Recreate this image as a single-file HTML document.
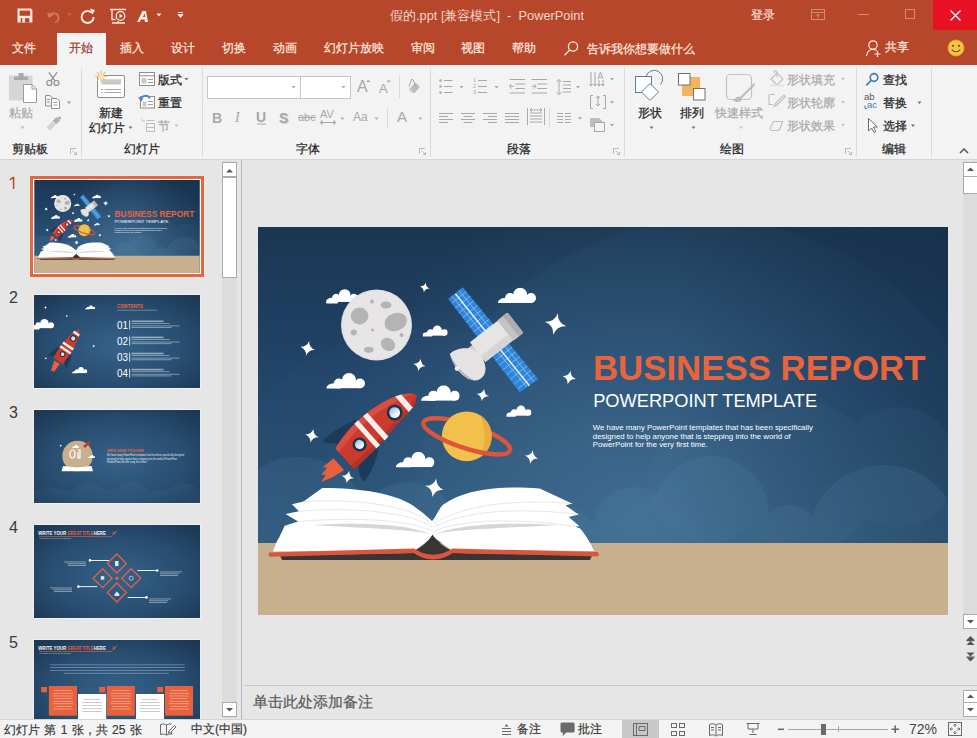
<!DOCTYPE html>
<html><head><meta charset="utf-8">
<style>
*{box-sizing:border-box}
html,body{margin:0;padding:0}
body{width:977px;height:738px;overflow:hidden;position:relative;background:#E6E6E6;font-family:"Liberation Sans",sans-serif;color:#444}
.a{position:absolute;white-space:nowrap}
.t12{font-size:12px;line-height:14px}
#title{left:0;top:0;width:977px;height:65px;background:#B7472A}
#ribbon{left:0;top:65px;width:977px;height:95px;background:#F3F3F3;border-bottom:1px solid #D5D5D5}
.tab{color:#FBE5DE;font-size:12px;line-height:14px;-webkit-text-stroke:0.25px currentColor}
.sep{position:absolute;width:1px;background:#DADADA}
.lbl{font-size:12px;line-height:14px;color:#262626;-webkit-text-stroke:0.25px currentColor}
.gray{color:#ABABAB}
#status{left:0;top:719px;width:977px;height:19px;background:#F3F3F3;border-top:1px solid #D4D4D4}
.st{font-size:12px;line-height:14px;color:#3A3A3A;-webkit-text-stroke:0.2px currentColor}
.num{font-size:16px;line-height:17px;color:#3A3A3A}
.thumb{position:absolute;left:33px;width:168px;height:95px;border:1px solid #F8F8F8;background:#24486A;overflow:hidden}
.sb{position:absolute;background:#fff;border:1px solid #ABABAB}
</style></head><body>

<svg width="0" height="0" style="position:absolute">
<defs>
 <linearGradient id="sky" x1="0" y1="0" x2="0" y2="1">
  <stop offset="0" stop-color="#1B3652"/>
  <stop offset="0.4" stop-color="#22456A"/>
  <stop offset="0.82" stop-color="#2B5477"/>
  <stop offset="1" stop-color="#2B5477"/>
 </linearGradient>
 <linearGradient id="rdark" x1="0" y1="0" x2="1" y2="0">
  <stop offset="0.6" stop-color="#13283F" stop-opacity="0"/>
  <stop offset="1" stop-color="#13283F" stop-opacity="0.38"/>
 </linearGradient>
 <radialGradient id="glow" gradientUnits="userSpaceOnUse" cx="380" cy="290" r="330">
  <stop offset="0" stop-color="#5B8DB3" stop-opacity="0.45"/>
  <stop offset="0.5" stop-color="#5B8DB3" stop-opacity="0.22"/>
  <stop offset="1" stop-color="#5B8DB3" stop-opacity="0"/>
 </radialGradient>
 <radialGradient id="sky2" cx="0.5" cy="0.55" r="0.7">
  <stop offset="0" stop-color="#35628A"/><stop offset="0.6" stop-color="#284D70"/><stop offset="1" stop-color="#1C3854"/>
 </radialGradient>
 <linearGradient id="win" x1="0" y1="0" x2="0" y2="1">
  <stop offset="0" stop-color="#9CC3DF"/><stop offset="0.55" stop-color="#D9EAF4"/><stop offset="1" stop-color="#FFFFFF"/>
 </linearGradient>
 <symbol id="cloud" viewBox="0 0 40 16">
  <g fill="#fff"><ellipse cx="7.5" cy="16" rx="7.5" ry="5.2"/><circle cx="12.8" cy="10.9" r="5.2"/><circle cx="23.4" cy="7.3" r="7.3"/><circle cx="34.8" cy="10.9" r="5.2"/><rect x="6" y="11" width="29" height="5"/></g>
 </symbol>
 <symbol id="star" viewBox="-1 -1 2 2">
  <circle r="0.35" fill="#fff" opacity="0.12"/><path d="M0-1Q.14-.14 1 0Q.14 .14 0 1Q-.14 .14-1 0Q-.14-.14 0-1Z" fill="#fff"/>
 </symbol>
 <symbol id="s1" viewBox="0 0 690 388">
  <rect width="690" height="388" fill="url(#sky)"/>
  <rect width="690" height="388" fill="url(#glow)"/>
  <circle cx="450" cy="287" r="294" fill="#4A7BA2" opacity="0.07"/>
  <circle cx="170" cy="330" r="230" fill="#4A7BA2" opacity="0.05"/>
  <rect width="690" height="388" fill="url(#rdark)"/>
  <g fill="#5A8AAE" opacity="0.07">
   <circle cx="545" cy="250" r="75"/>
   <circle cx="640" cy="240" r="60"/>
   <circle cx="450" cy="255" r="60"/>
  </g>
  <g fill="#5A8AAE" opacity="0.16">
   <circle cx="453" cy="287" r="58"/>
   <circle cx="376" cy="300" r="40"/>
   <circle cx="531" cy="308" r="30"/>
   <circle cx="626" cy="314" r="76"/>
   <circle cx="300" cy="318" r="40"/>
   <circle cx="40" cy="300" r="70"/>
   <circle cx="150" cy="305" r="50"/>
   <rect x="0" y="295" width="690" height="25"/>
  </g>
  <rect x="0" y="316" width="690" height="72" fill="#C8AF8E"/>
  <!-- clouds -->
  <use href="#cloud" x="68" y="60.6" width="32" height="15.9"/>
  <use href="#cloud" x="68" y="146" width="39.4" height="15.4"/>
  <use href="#cloud" x="164.5" y="97.6" width="25.2" height="12"/>
  <use href="#cloud" x="239.8" y="60.6" width="38.2" height="15.4"/>
  <use href="#cloud" x="163" y="158.3" width="38.7" height="15.5"/>
  <use href="#cloud" x="248.2" y="177.5" width="25.3" height="12.2"/>
  <use href="#cloud" x="137.8" y="224.8" width="38.6" height="15.5"/>
  <!-- stars -->
  <use href="#star" x="42.1" y="113.9" width="15" height="15" transform="rotate(12 49.6 121.4)"/>
  <use href="#star" x="161.8" y="55.5" width="10" height="10" transform="rotate(12 166.8 60.5)"/>
  <use href="#star" x="155.0" y="131.5" width="13" height="13" transform="rotate(12 161.5 138.0)"/>
  <use href="#star" x="286.6" y="86.0" width="22" height="22" transform="rotate(12 297.6 97.0)"/>
  <use href="#star" x="304.2" y="143.5" width="14" height="14" transform="rotate(12 311.2 150.5)"/>
  <use href="#star" x="218.4" y="161.5" width="13" height="13" transform="rotate(12 224.9 168.0)"/>
  <use href="#star" x="47.0" y="201.9" width="14" height="14" transform="rotate(12 54.0 208.9)"/>
  <use href="#star" x="83.4" y="243.5" width="13" height="13" transform="rotate(12 89.9 250.0)"/>
  <use href="#star" x="166.9" y="251.3" width="19" height="19" transform="rotate(12 176.4 260.8)"/>
  <use href="#star" x="266.5" y="223.0" width="14" height="14" transform="rotate(12 273.5 230.0)"/>
  <!-- moon -->
  <circle cx="118.5" cy="98" r="35.5" fill="#DDE2E8"/>
  <circle cx="118.5" cy="98" r="33.8" fill="#E7E5E5"/>
  <g fill="#B4B4B4">
   <ellipse cx="101.6" cy="89" rx="8.8" ry="8.4"/>
   <ellipse cx="137.7" cy="95" rx="11.5" ry="8.9" transform="rotate(-20 137.7 95)"/>
   <ellipse cx="128" cy="78" rx="5.5" ry="3.5"/>
   <ellipse cx="130" cy="117.4" rx="7.5" ry="6.3" transform="rotate(35 130 117.4)"/>
   <ellipse cx="110.8" cy="122.7" rx="4.8" ry="3"/>
   <circle cx="95.8" cy="105.6" r="3"/>
   <circle cx="114" cy="74.4" r="2"/>
   <circle cx="114.5" cy="103" r="1.5"/>
   <circle cx="143.5" cy="108" r="2"/>
  </g>
  <!-- satellite -->
  <clipPath id="panelclip"><path d="M190.1 71.7L204.8 60.3L280.3 152.2L261.6 165.2Z"/></clipPath>
  <path d="M190.1 71.7L204.8 60.3L280.3 152.2L261.6 165.2Z" fill="#2F85D9"/>
  <g clip-path="url(#panelclip)" stroke="#93C5F1" stroke-width="0.7" fill="none">
   <g transform="translate(235.2 112.2) rotate(50.6)">
    <path d="M-54 -12v24M-48 -12v24M-42 -12v24M-36 -12v24M-30 -12v24M-24 -12v24M-18 -12v24M-12 -12v24M-6 -12v24M6 -12v24M12 -12v24M18 -12v24M24 -12v24M30 -12v24M36 -12v24M42 -12v24M48 -12v24M54 -12v24"/>
    <path d="M-62 -4.5h124M-62 4.5h124"/>
   </g>
  </g>
  <path d="M197.4 66.8L271.4 158.7" stroke="#EAF3FC" stroke-width="1.4"/>
  <g transform="translate(237.8 111) rotate(-38)">
   <rect x="-30" y="-9" width="8" height="18" fill="#CFCDCD"/>
   <rect x="-23" y="-12.5" width="36" height="25" fill="#E6E4E4"/>
   <rect x="-23" y="5" width="36" height="7.5" fill="#D6D4D4"/>
   <rect x="12" y="-13" width="13" height="26" rx="1.5" fill="#C4C4C4"/>
   <rect x="19" y="-13" width="6" height="26" rx="1.5" fill="#ADADAD"/>
  </g>
  <path d="M191.75 127C196 122 205 120.5 212 121.5C221 123 227 133 227.5 141C228 148 223 154 216 153.5C208 150 196 139 191.75 127Z" fill="#E5E3E3"/>
  <path d="M191.75 127C196 139 206 149 216 153.5C208 153 196 143 191.75 127Z" fill="#C9C7C7"/>
  <circle cx="199" cy="141.6" r="2.3" fill="#F0F0F0"/>
  <!-- planet ring back -->
  <g transform="translate(208.7 209.3) rotate(18)">
   <path d="M-45.5 0A45.5 12 0 0 1 45.5 0" fill="none" stroke="#DD553A" stroke-width="4.5"/>
  </g>
  <circle cx="208.7" cy="209.3" r="24.9" fill="#F3C04B"/>
  <path d="M222 188A24.9 24.9 0 0 1 222 230.5Q231 209 222 188Z" fill="#E9A83F" opacity="0.8"/>
  <g transform="translate(208.7 209.3) rotate(18)">
   <path d="M-45.5 0A45.5 12 0 0 0 45.5 0" fill="none" stroke="#DD553A" stroke-width="4.5"/>
  </g>
  <!-- rocket -->
  <g transform="translate(86.8 231.9) rotate(-41.6)">
   <path d="M-8 -8L-8 8L-22 5.5L-33 1.5L-25 -0.5L-28 -4L-19 -5L-22 -8.5Z" fill="#E8613C"/>
   <path d="M6 -15C-1 -21 -4 -25 -4 -28.5C8 -29 26 -26 38 -20Z" fill="#1D3A58"/>
   <path d="M6 14C0 20 -1 26 -0.5 30C10 28 24 22 34 13Z" fill="#1D3A58"/>
   <path d="M0 -14C12 -18 28 -20 41 -19.8C56 -19.5 70 -17 82 -12C90 -8.5 95 -4 96 0C92 4 88 6.5 84.5 6.9C75 8 68 8.7 60 9.3L28 13.1L0 14Z" fill="#CB3A2D"/>
   <path d="M0 -14C12 -18 28 -20 41 -19.8C56 -19.5 70 -17 82 -12C88 -9 92 -6 94 -3C80 -9 60 -13 41 -13.5C28 -13.5 14 -12 0 -9Z" fill="#DD5446" opacity="0.8"/>
   <path d="M0 9L28 8.5L60 5.5C70 4.8 80 3.5 94 1.5C92 4 88 6.5 84.5 6.9C75 8 68 8.7 60 9.3L28 13.1L0 14Z" fill="#A92B22" opacity="0.6"/>
   <path d="M30.5 -20L35.5 -20L35.5 13L30.5 13.3Z" fill="#F3EFEC"/>
   <path d="M42 -19.8L47.5 -19.6L47.5 12.2L42 12.6Z" fill="#F3EFEC"/>
   <path d="M79 -13.2L85 -10.8L85 6.7L79 7.4Z" fill="#F3EFEC"/>
   <circle cx="20.6" cy="-1" r="7" fill="#1C3450"/>
   <circle cx="20.6" cy="-1" r="4.6" fill="url(#win)"/>
   <circle cx="68" cy="-1.5" r="8" fill="#1C3450"/>
   <circle cx="68" cy="-1.5" r="5.4" fill="url(#win)"/>
  </g>
  <!-- book -->
  <path d="M22 328.5L156 326Q175 338 194 326L334 328.5L332 333L24 333Z" fill="#3A3434"/>
  <path d="M15.1 324.6C17 318 19 314 21.3 310.3L26.7 298.7L40.1 294.6L27.6 287L41 284.3L33.9 277.2L45.5 274.5L64.3 261.1C100 261 140 266 159.2 281.7C168 288 172 292 175.4 295.1L175.4 310L157 323L15.1 324.6Z" fill="#FFFFFF"/>
  <path d="M335.5 323.9C333 318 331 314 331.2 315.3L321.5 301.4L317.2 299.4L321.5 299.2L310.7 290L320.4 287.4L307.5 278.4L314 276.6L281.7 261.6C235 258 205 264 185 277.8C180 283 178 290 174.2 293.8L175.4 310L193.5 323L335.5 323.9Z" fill="#FFFFFF"/>
  <path d="M331.2 315.3C328 310 325 305 321.5 301.4L335.5 323.9Z" fill="#fff" stroke="#fff" stroke-width="1"/>
  <g fill="none" stroke="#E4E4E4" stroke-width="0.9">
   <path d="M40.1 294.6C90 290 150 292 174 304"/>
   <path d="M41 284.3C90 280 150 284 174 300"/>
   <path d="M45.5 274.5C90 272 150 276 174 297"/>
   <path d="M317.2 299.4C260 291 205 292 176 304"/>
   <path d="M320.4 287.4C260 280 205 284 176 300"/>
   <path d="M314 276.6C260 272 205 277 176 297"/>
  </g>
  <path d="M55 298C100 295 150 297 172 307C150 302 100 301 55 298Z" fill="#CFCFCF" opacity="0.85"/>
  <path d="M300 298C250 295 200 297 178 307C200 302 250 301 300 298Z" fill="#CFCFCF" opacity="0.85"/>
  <path d="M156 324Q168 318 174.5 307.8Q181 318 194.5 324Q175 334 156 324Z" fill="#3A3434"/>
  <path d="M11.5 325.5L156 321.5Q175 334 194.5 321.5L339.5 325Q342 327 340 329.5L194.5 326Q175 339 156 326L11.5 329.8Q9.5 327.5 11.5 325.5Z" fill="#DA553B"/>
  <!-- text -->
  <text x="335" y="152.6" font-family="Liberation Sans" font-weight="bold" font-size="35" fill="#E8643C" textLength="332.5" lengthAdjust="spacingAndGlyphs">BUSINESS REPORT</text>
  <text x="335.2" y="179.7" font-family="Liberation Sans" font-size="17.5" fill="#FFFFFF" textLength="224" lengthAdjust="spacingAndGlyphs">POWERPOINT TEMPLATE</text>
  <g font-family="Liberation Sans" font-size="7.8" fill="#FFFFFF">
   <text x="334.8" y="202.6" textLength="220" lengthAdjust="spacingAndGlyphs">We have many PowerPoint templates that has been specifically</text>
   <text x="334.8" y="211.5" textLength="198" lengthAdjust="spacingAndGlyphs">designed to help anyone that is stepping into the world of</text>
   <text x="334.8" y="220.4" textLength="115" lengthAdjust="spacingAndGlyphs">PowerPoint for the very first time.</text>
  </g>
 </symbol>
</defs>
</svg>

<!-- title bar + tabs -->
<div id="title" class="a"></div>
<div class="a" style="left:933px;top:0;width:44px;height:30px;background:#E81123"></div>
<div class="a" style="left:57px;top:33px;width:49px;height:32px;background:#F3F3F3"></div>

<div class="a" style="left:390px;top:8px;font-size:12.8px;line-height:15px;color:#F4D6CD">假的.ppt [兼容模式] &nbsp;- &nbsp;PowerPoint</div>
<div class="a" style="left:751px;top:8px;font-size:12px;line-height:14px;color:#F4D6CD;-webkit-text-stroke:0.2px currentColor">登录</div>

<div class="a tab" style="left:12px;top:41px">文件</div>
<div class="a tab" style="left:69px;top:41px;color:#9C4130">开始</div>
<div class="a tab" style="left:120px;top:41px">插入</div>
<div class="a tab" style="left:171px;top:41px">设计</div>
<div class="a tab" style="left:222px;top:41px">切换</div>
<div class="a tab" style="left:273px;top:41px">动画</div>
<div class="a tab" style="left:324px;top:41px">幻灯片放映</div>
<div class="a tab" style="left:411px;top:41px">审阅</div>
<div class="a tab" style="left:461px;top:41px">视图</div>
<div class="a tab" style="left:512px;top:41px">帮助</div>
<div class="a tab" style="left:587px;top:42px">告诉我你想要做什么</div>
<div class="a tab" style="left:885px;top:40px">共享</div>

<!-- ribbon -->
<div id="ribbon" class="a"></div>

<!-- ribbon icons -->
<svg class="a" style="left:0;top:0" width="977" height="160" viewBox="0 0 977 160">
<!-- title bar icons -->
<path d="M17.5 8.6h13.5l1.4 1.4v12.5h-14.9z" fill="#FBE9E3"/>
<rect x="19.6" y="10.6" width="10.6" height="5.2" fill="#B7472A"/>
<rect x="20.6" y="18.2" width="8.8" height="4.3" fill="#B7472A"/>
<rect x="22.3" y="18.2" width="2.6" height="4.3" fill="#FBE9E3"/>
<path d="M49 15.5c3-3.5 9-3 9.5 2 .3 2.5-1.5 4.5-3.5 5" fill="none" stroke="#D07A62" stroke-width="1.8"/>
<path d="M47 12l1.5 6 5-2.5z" fill="#D07A62"/>
<path d="M67.5 13.5h4l-2 2.5z" fill="#C97056"/>
<path d="M92 13c-1-1.2-2.6-2-4.4-2a6 6 0 1 0 6 6" fill="none" stroke="#FBE9E3" stroke-width="1.9"/>
<path d="M90 8.5l5 1.5-2.5 4.5z" fill="#FBE9E3"/>
<g fill="none" stroke="#FBE9E3" stroke-width="1.3">
 <path d="M110 9.5h16M112 10v9.5h3.5"/>
 <circle cx="120.5" cy="16" r="4.3"/>
 <path d="M118 21v2M112 23h13"/>
</g>
<path d="M119.5 13.8v4.5l3.5-2.2z" fill="#FBE9E3"/>
<path d="M137 22l5.5-11h3.5l2 11h-3l-.4-2.5h-3.6l-1.3 2.5zm5.8-5h2.4l-.5-3.5z" fill="#FBE9E3"/>
<path d="M156.5 13.5h5l-2.5 3z" fill="#FBE9E3"/>
<path d="M178 12.5h5M178 14.5h5l-2.5 3z" fill="#FBE9E3" stroke="#FBE9E3" stroke-width="0.9"/>
<!-- window controls -->
<g fill="none" stroke="#D58C76" stroke-width="1">
 <rect x="811.5" y="9.5" width="13" height="10"/>
 <path d="M811.5 12.5h13M818 14v4M816.5 15.5l1.5-1.5 1.5 1.5"/>
 <path d="M858 14.5h11"/>
 <rect x="905.5" y="9.5" width="9" height="9"/>
</g>
<path d="M950.5 10.5l10 10M960.5 10.5l-10 10" stroke="#fff" stroke-width="1.3"/>
<!-- search -->
<g fill="none" stroke="#FBE9E3" stroke-width="1.3">
 <circle cx="573" cy="46.5" r="4.6"/>
 <path d="M569.8 50l-5.3 5.3"/>
</g>
<!-- share person -->
<g fill="none" stroke="#FBE9E3" stroke-width="1.2">
 <circle cx="873" cy="45" r="4.2"/>
 <path d="M866.5 56c0.5-4 3-6.5 6.5-6.5 1.5 0 2.8.4 3.8 1.1"/>
 <path d="M877.5 51v6M874.5 54h6"/>
</g>
<!-- smiley -->
<circle cx="956" cy="48" r="8" fill="#F5C242" stroke="#E6A630" stroke-width="0.8"/>
<circle cx="953" cy="45.8" r="1.1" fill="#7A4B1A"/><circle cx="959" cy="45.8" r="1.1" fill="#7A4B1A"/>
<path d="M951.8 49.5c1.8 3 6.6 3 8.4 0" fill="none" stroke="#7A4B1A" stroke-width="1.1"/>

<!-- separators -->
<g fill="#DADADA">
 <rect x="81" y="68" width="1" height="89"/>
 <rect x="202" y="68" width="1" height="89"/>
 <rect x="430" y="68" width="1" height="89"/>
 <rect x="624" y="68" width="1" height="89"/>
 <rect x="856" y="68" width="1" height="89"/>
 <rect x="931" y="68" width="1" height="89"/>
 <rect x="399" y="76" width="1" height="22"/>
 <rect x="387" y="108" width="1" height="20"/>
 <rect x="549" y="108" width="1" height="20"/>
</g>
<!-- dialog launchers -->
<g fill="none" stroke="#B4B4B4" stroke-width="0.9">
 <path d="M70.5 154v-5.5h5.5M72.5 150.5l4 4M74 154.5h2.5v-2.5"/>
 <path d="M419.5 154v-5.5h5.5M421.5 150.5l4 4M423 154.5h2.5v-2.5"/>
 <path d="M613.5 154v-5.5h5.5M615.5 150.5l4 4M617 154.5h2.5v-2.5"/>
 <path d="M845.5 154v-5.5h5.5M847.5 150.5l4 4M849 154.5h2.5v-2.5"/>
</g>
<path d="M960 153l4-4 4 4" fill="none" stroke="#555" stroke-width="1.5"/>

<!-- clipboard group -->
<rect x="9" y="75.5" width="23.5" height="25" fill="#D6D6D6"/>
<path d="M14 76.5h14v3.5h-14zM18.5 73h5v3.5h-5z" fill="#A9A9A9"/>
<path d="M23.5 84.5h8.5l4.5 4.5v13.5h-13z" fill="#fff" stroke="#9C9C9C"/>
<path d="M32 84.5v4.5h4.5" fill="none" stroke="#9C9C9C"/>
<g fill="none" stroke="#8E8E8E" stroke-width="1.2">
 <circle cx="49.3" cy="83" r="2.5"/><circle cx="56.5" cy="83" r="2.5"/>
 <path d="M50.8 80.8L57 72.3M55 80.8L48.8 72.3"/>
</g>
<g fill="#F3F3F3" stroke="#8E8E8E" stroke-width="1">
 <path d="M45.5 95.5h4.5l2 2v8.5h-6.5z"/>
 <path d="M51.5 98.5h5.5l2.5 2.5v7.5h-8z" fill="#fff"/>
</g>
<path d="M47 99.5h3M47 102h3M53.5 102.5h4M53.5 105h4" stroke="#8E8E8E" stroke-width="0.9"/>
<path d="M67 101.5h4l-2 2.5z" fill="#9A9A9A"/>
<path d="M46.5 127l5.5-5.5 3.5 3.5-5.5 5.5z" fill="#D3D3D3"/>
<path d="M52.5 121l4-4 3.5 3.5-4 4z" fill="#B0B0B0"/>
<path d="M57.5 118l2-2 2 2-2 2z" fill="#B0B0B0"/>
<path d="M20.5 126.5h4l-2 2.5z" fill="#B5B5B5"/>

<!-- slides group -->
<rect x="97.5" y="75.5" width="27" height="22" rx="1.5" fill="#fff" stroke="#8E8E8E"/>
<rect x="101.5" y="79.3" width="19.5" height="5.2" fill="#C9C9C9"/>
<path d="M101 89.5h2M104.5 89.5h16.5M101 92.5h2M104.5 92.5h16.5" stroke="#A0A0A0" stroke-width="0.9"/>
<g stroke="#F4C47C" stroke-width="1.3">
 <path d="M101.2 70.5v12M95.2 76.4h12M97 72.2l8.4 8.4M105.4 72.2l-8.4 8.4"/>
</g>
<circle cx="101.2" cy="76.4" r="2.6" fill="#FBE3B8"/>
<path d="M128.5 126.5h4l-2 2.5z" fill="#707070"/>
<rect x="139.5" y="72.5" width="15" height="13" fill="#fff" stroke="#8E8E8E"/>
<path d="M139.5 75.8h15" stroke="#8E8E8E"/>
<rect x="141.5" y="78" width="5" height="5.5" fill="#C9C9C9"/>
<path d="M148 79.5h5M148 82.5h5" stroke="#8E8E8E" stroke-width="0.9"/>
<path d="M184.5 78h4l-2 2.5z" fill="#707070"/>
<rect x="140.5" y="96.5" width="14" height="11.5" fill="#fff" stroke="#8E8E8E"/>
<rect x="142.5" y="101.5" width="4" height="5" fill="#C9C9C9"/>
<path d="M148 101.5h5M148 104.5h5" stroke="#8E8E8E" stroke-width="0.9"/>
<path d="M140.5 99.5c1-4 7-5.5 9.5-1" fill="none" stroke="#4C8DC4" stroke-width="1.8"/>
<path d="M138 97l3 5 2.5-4z" fill="#4C8DC4"/>
<g fill="none" stroke="#BDBDBD" stroke-width="1">
 <path d="M146.5 120.5h8M146.5 123.5h8v8h-8zM146.5 127.5h8"/>
</g>
<path d="M141 118.5l1 2.5 2.5-1-1 2" stroke="#D0D0D0" stroke-width="1" fill="none"/>
<path d="M174.5 124.5h4l-2 2.5z" fill="#C2C2C2"/>

<!-- font group -->
<rect x="207.5" y="76.5" width="93" height="22" fill="#fff" stroke="#C6C6C6"/>
<rect x="300.5" y="76.5" width="50" height="22" fill="#fff" stroke="#C6C6C6"/>
<path d="M291.5 86h4l-2 2.5zM341.5 86h4l-2 2.5z" fill="#A8A8A8"/>
<path d="M366 82l2.2-2.2 2.2 2.2zM386.5 80.5h4.4l-2.2 2.2z" fill="#A8A8A8"/>
<path d="M374.5 117.5h4l-2 2.5zM340.5 117.5h4l-2 2.5zM418.5 117.5h4l-2 2.5z" fill="#B0B0B0"/>
<g fill="none" stroke="#A8A8A8" stroke-width="1.1">
 <path d="M320.5 122.5h15M322.5 120.5l-2 2 2 2M333.5 120.5l2 2-2 2"/>
</g>
<path d="M409.5 89l6-6.5 4.5 4.5-6 6.5z" fill="#BDBDBD"/>
<path d="M412 92.5l-2.5-3.5" stroke="#D2D2D2" stroke-width="2"/>
<path d="M409 86.5l2.5-7h1.5l2.5 7" fill="none" stroke="#A8A8A8" stroke-width="1"/>
<rect x="257" y="123.5" width="9" height="1" fill="#A8A8A8"/>

<!-- paragraph group -->
<g fill="#A8A8A8">
 <circle cx="440.5" cy="80.5" r="1.3"/><circle cx="440.5" cy="86.5" r="1.3"/><circle cx="440.5" cy="92.5" r="1.3"/>
 <path d="M459.5 86h4l-2 2.5zM494.5 86h4l-2 2.5zM576 86h4l-2 2.5zM610 78h4l-2 2.5zM610 101h4l-2 2.5zM610 124h4l-2 2.5zM578 117h4l-2 2.5z"/>
</g>
<g fill="none" stroke="#A8A8A8" stroke-width="1">
 <path d="M444 80.5h8.5M444 86.5h8.5M444 92.5h8.5"/>
 <path d="M478 80.5h9M478 86.5h9M478 92.5h9"/>
 <path d="M509.5 79.5h15.5M515.5 84h9.5M515.5 88.5h9.5M509.5 93h15.5M514 86.3h-4.5M511.5 84l-2 2.3 2 2.3"/>
 <path d="M531.5 79.5h15.5M537.5 84h9.5M537.5 88.5h9.5M531.5 93h15.5M531.5 86.3h4.5M534 84l2 2.3-2 2.3"/>
 <path d="M559 79.5v15M556.5 82l2.5-2.5 2.5 2.5M556.5 92l2.5 2.5 2.5-2.5M563 81.5h8M563 85h8M563 88.5h8M563 92h8"/>
 <path d="M439 113.5h14M439 116.5h9M439 119.5h14M439 122.5h9"/>
 <path d="M461 113.5h14M463.5 116.5h9M461 119.5h14M463.5 122.5h9"/>
 <path d="M483 113.5h14M488 116.5h9M483 119.5h14M488 122.5h9"/>
 <path d="M505 113.5h14M505 116.5h14M505 119.5h14M505 122.5h14"/>
 <path d="M527.5 108v17M544.5 108v17M530 113h12M530 116h12M530 119h12M530 122h12M530 110h12M532 108l-2 2 2 2M540 108l2 2-2 2"/>
 <path d="M557 113.5h6M557 116.5h6M557 119.5h6M557 122.5h6M565 113.5h6M565 116.5h6M565 119.5h6M565 122.5h6"/>
 <path d="M591 72v14M595 72v14M599 80v6M603 80v6M589.5 84l1.5 2 1.5-2M593.5 84l1.5 2 1.5-2M597.5 84l1.5 2 1.5-2M601.5 84l1.5 2 1.5-2"/>
 <path d="M598 79l2.5-7 2.5 7M599 77h3"/>
 <path d="M593 95.5h-2.5v13h2.5M603 95.5h2.5v13H603M598 96v10M596 98l2-2 2 2M596 104l2 2 2-2"/>
 <rect x="594.5" y="122.5" width="10" height="9"/>
</g>
<path d="M590 118h9l4 4h-9v5h-4z" fill="#BDBDBD"/>

<!-- drawing group -->
<g fill="none" stroke="#5B7F9B" stroke-width="1">
 <path d="M646 76.5a8.5 8.5 0 1 1 14.5 8"/>
 <rect x="635.5" y="76.5" width="16" height="16" fill="#fff"/>
 <path d="M650 83.5l8.5 8.5-8.5 8.5-8.5-8.5z" fill="#fff"/>
</g>
<rect x="682" y="77" width="18" height="19" fill="#F2B45E"/>
<rect x="678.5" y="73.5" width="11.5" height="11.5" fill="#fff" stroke="#707070"/>
<rect x="693.5" y="88.5" width="11.5" height="11.5" fill="#fff" stroke="#707070"/>
<rect x="726.5" y="74.5" width="25" height="25" rx="4" fill="none" stroke="#C2C2C2" stroke-width="1.2"/>
<path d="M733 101c2-4 5-5 7-4l14-14 1.5 1.5-14 14c1 2-1 5-8.5 2.5z" fill="#BDBDBD"/>
<path d="M649.5 126.5h4l-2 2.5zM691.5 126.5h4l-2 2.5z" fill="#707070"/>
<path d="M739 126.5h4l-2 2.5z" fill="#C2C2C2"/>
<g fill="none" stroke="#BDBDBD" stroke-width="1.1">
 <path d="M771 79l6-6 6 6-6 6z"/>
 <path d="M774 73c0-3 3-3 3 0v4"/>
 <path d="M769.5 94.5h-.5v10h4M770 94.5h5"/>
 <path d="M775 104l9-9 1.5 1.5-9 9-2.5 1z"/>
 <path d="M770.5 127.5l3-6h9l-2 6c-.5 2-2 3-4 3h-4c-2 0-2.5-1-2-3z"/>
</g>
<path d="M770 85.5h14" stroke="#E2E2E2" stroke-width="2"/>
<path d="M841 78h4l-2 2.5zM841 101h4l-2 2.5zM841 124h4l-2 2.5z" fill="#C2C2C2"/>

<!-- editing group -->
<g fill="none" stroke="#3F7FB0" stroke-width="1.7">
 <circle cx="874" cy="77.5" r="3.8"/>
 <path d="M871.2 80.3l-5 5"/>
</g>
<path d="M917.5 101.5h4l-2 2.5zM911 124.5h4l-2 2.5z" fill="#707070"/>
<path d="M868.5 118.5v12.5l3-3 2.5 4.5 1.8-1-2.5-4.5h4z" fill="#fff" stroke="#6A6A6A" stroke-width="1"/>
<path d="M865 105.5v3h2" fill="none" stroke="#3F7FB0" stroke-width="1"/>
</svg>
<div class="a" style="left:864px;top:93px;font-size:9.5px;line-height:8px;color:#555">ab</div>
<div class="a" style="left:867px;top:100px;font-size:9.5px;line-height:9px;color:#3F7FB0">ac</div>
<div class="a" style="left:473px;top:77px;font-size:5.5px;line-height:6px;color:#A8A8A8;white-space:pre">1
2
3</div>
<div class="a" style="left:212px;top:110px;font-size:14px;line-height:16px;color:#A8A8A8;font-weight:bold">B</div>
<div class="a" style="left:235px;top:110px;font-size:14px;line-height:16px;color:#A8A8A8;font-style:italic;font-family:'Liberation Serif',serif">I</div>
<div class="a" style="left:256px;top:109px;font-size:14px;line-height:16px;color:#A8A8A8;font-weight:bold">U</div>
<div class="a" style="left:279px;top:110px;font-size:14px;line-height:16px;color:#A8A8A8;font-weight:bold;text-shadow:1px 1px 1px #ccc">S</div>
<div class="a" style="left:298px;top:110px;font-size:11px;line-height:14px;color:#A8A8A8;text-decoration:line-through">abc</div>
<div class="a" style="left:320px;top:108px;font-size:11px;line-height:12px;color:#A8A8A8">AV</div>
<div class="a" style="left:353px;top:110px;font-size:12px;line-height:14px;color:#A8A8A8">Aa</div>
<div class="a" style="left:397px;top:108px;font-size:15px;line-height:17px;color:#A8A8A8">A</div>
<div class="a" style="left:357px;top:78px;font-size:16px;line-height:18px;color:#A8A8A8">A</div>
<div class="a" style="left:379px;top:81px;font-size:13px;line-height:15px;color:#A8A8A8">A</div>

<!-- ribbon labels -->
<div class="a lbl gray" style="left:9px;top:106px">粘贴</div>
<div class="a lbl" style="left:12px;top:142px">剪贴板</div>
<div class="a lbl" style="left:99px;top:106px">新建</div>
<div class="a lbl" style="left:89px;top:121px">幻灯片</div>
<div class="a lbl" style="left:158px;top:73px">版式</div>
<div class="a lbl" style="left:158px;top:96px">重置</div>
<div class="a lbl gray" style="left:158px;top:119px">节</div>
<div class="a lbl" style="left:124px;top:142px">幻灯片</div>
<div class="a lbl" style="left:296px;top:142px">字体</div>
<div class="a lbl" style="left:507px;top:142px">段落</div>
<div class="a lbl" style="left:638px;top:106px">形状</div>
<div class="a lbl" style="left:680px;top:106px">排列</div>
<div class="a lbl gray" style="left:715px;top:106px">快速样式</div>
<div class="a lbl" style="left:720px;top:142px">绘图</div>
<div class="a lbl gray" style="left:787px;top:73px">形状填充</div>
<div class="a lbl gray" style="left:787px;top:96px">形状轮廓</div>
<div class="a lbl gray" style="left:787px;top:119px">形状效果</div>
<div class="a lbl" style="left:883px;top:73px">查找</div>
<div class="a lbl" style="left:883px;top:96px">替换</div>
<div class="a lbl" style="left:883px;top:119px">选择</div>
<div class="a lbl" style="left:882px;top:142px">编辑</div>


<!-- left pane -->
<div class="a" style="left:222px;top:161px;width:15px;height:557px;background:#DCDCDC"></div>
<div class="sb" style="left:222px;top:162px;width:15px;height:15px"></div>
<div class="sb" style="left:222px;top:177px;width:15px;height:101px"></div>
<div class="sb" style="left:222px;top:702px;width:15px;height:15px"></div>
<div class="a" style="left:241px;top:160px;width:1px;height:559px;background:#B8B8B8"></div>

<svg class="a" style="left:0;top:170px" width="25" height="25"><path d="M13.6 7v12M13.6 7.2L9.8 9.8" fill="none" stroke="#B7472A" stroke-width="1.5"/></svg>
<div class="a num" style="left:9px;top:289px">2</div>
<div class="a num" style="left:9px;top:404px">3</div>
<div class="a num" style="left:9px;top:519px">4</div>
<div class="a num" style="left:9px;top:634px">5</div>

<div class="a" style="left:30px;top:176px;width:174px;height:101px;border:3px solid #E3683F;background:#fff"></div>
<div class="a" style="left:33px;top:294px;width:168px;height:95px;background:#F2F2F2;border:1px solid #F0F0F0"></div>
<div class="a" style="left:33px;top:409px;width:168px;height:95px;background:#F2F2F2;border:1px solid #F0F0F0"></div>
<div class="a" style="left:33px;top:524px;width:168px;height:95px;background:#F2F2F2;border:1px solid #F0F0F0"></div>
<div class="a" style="left:33px;top:639px;width:168px;height:80px;background:#F2F2F2;border:1px solid #F0F0F0;border-bottom:none"></div>

<svg class="a" style="left:34px;top:180px" width="166" height="93"><use href="#s1" width="166" height="93"/></svg>
<svg class="a" style="left:34px;top:295px" width="166" height="93" viewBox="0 0 166 93">
 <rect width="166" height="93" fill="url(#sky2)"/>
 <use href="#cloud" x="-3" y="22.7" width="23" height="11.7"/>
 <use href="#cloud" x="50.7" y="10.2" width="10.7" height="4.1"/>
 <use href="#cloud" x="38" y="72" width="15.4" height="6.3"/>
 <use href="#star" x="10" y="11" width="3" height="3"/>
 <use href="#star" x="31.5" y="19.7" width="2.6" height="2.6"/>
 <use href="#star" x="58.2" y="49.5" width="3" height="3"/>
 <use href="#star" x="10.5" y="62" width="2.6" height="2.6"/>
 <g transform="translate(24 66) rotate(-56) scale(0.4)">
   <path d="M-4 -8L-32 -1L-26 3L-30 7L-4 8Z" fill="#E8623D"/>
   <path d="M5 -13L-3 -29L20 -24L40 -14Z" fill="#1E3B5A"/>
   <path d="M5 13L-4 28L20 24L40 14Z" fill="#1E3B5A"/>
   <path d="M0 -14L0 14L30 15.5C60 15 85 8 96 0C85 -8 60 -15 30 -15.5Z" fill="#CC3A2C"/>
   <rect x="30.5" y="-16" width="6" height="32" fill="#F4F1EE"/>
   <rect x="42" y="-15.5" width="6" height="31" fill="#F4F1EE"/>
   <path d="M79.5 -9.5L85.5 -8L85.5 8L79.5 9.5Z" fill="#F4F1EE"/>
   <circle cx="20.6" cy="0" r="7" fill="#1C3450"/><circle cx="20.6" cy="0" r="4.5" fill="#CFE3F0"/>
   <circle cx="68" cy="0" r="8" fill="#1C3450"/><circle cx="68" cy="0" r="5.3" fill="#CFE3F0"/>
 </g>
 <text x="83" y="13" font-family="Liberation Sans" font-weight="bold" font-size="5.8" fill="#E8643C" textLength="26" lengthAdjust="spacingAndGlyphs">CONTENTS</text>
 <rect x="83" y="14.8" width="40" height="0.7" fill="#9FB3C6" opacity="0.8"/>
 <g fill="#fff">
  <text x="83" y="33.5" font-family="Liberation Sans" font-size="10" textLength="11" lengthAdjust="spacingAndGlyphs">01</text>
  <text x="83" y="49.6" font-family="Liberation Sans" font-size="10" textLength="11" lengthAdjust="spacingAndGlyphs">02</text>
  <text x="83" y="65.7" font-family="Liberation Sans" font-size="10" textLength="11" lengthAdjust="spacingAndGlyphs">03</text>
  <text x="83" y="81.8" font-family="Liberation Sans" font-size="10" textLength="11" lengthAdjust="spacingAndGlyphs">04</text>
  <rect x="95.3" y="25.4" width="0.8" height="9"/><rect x="95.3" y="41.5" width="0.8" height="9"/>
  <rect x="95.3" y="57.6" width="0.8" height="9"/><rect x="95.3" y="73.7" width="0.8" height="9"/>
 </g>
 <g fill="#DCE5EE" opacity="0.6">
  <rect x="97.5" y="25.5" width="32" height="1.6"/><rect x="97.5" y="28" width="38" height="0.8"/><rect x="97.5" y="30.5" width="48" height="0.8"/><rect x="97.5" y="32.2" width="40" height="0.8"/>
  <rect x="97.5" y="41.6" width="32" height="1.6"/><rect x="97.5" y="44.1" width="38" height="0.8"/><rect x="97.5" y="46.6" width="48" height="0.8"/><rect x="97.5" y="48.3" width="40" height="0.8"/>
  <rect x="97.5" y="57.7" width="32" height="1.6"/><rect x="97.5" y="60.2" width="38" height="0.8"/><rect x="97.5" y="62.7" width="48" height="0.8"/><rect x="97.5" y="64.4" width="40" height="0.8"/>
  <rect x="97.5" y="73.8" width="32" height="1.6"/><rect x="97.5" y="76.3" width="38" height="0.8"/><rect x="97.5" y="78.8" width="48" height="0.8"/><rect x="97.5" y="80.5" width="40" height="0.8"/>
 </g>
</svg>
<svg class="a" style="left:34px;top:410px" width="166" height="93" viewBox="0 0 166 93">
 <rect width="166" height="93" fill="url(#sky2)"/>
 <g fill="#4F7FA3" opacity="0.13"><circle cx="55" cy="95" r="22"/><circle cx="98" cy="92" r="20"/><circle cx="150" cy="95" r="22"/><circle cx="15" cy="97" r="20"/><rect x="0" y="80" width="166" height="13"/></g>
 <circle cx="43.5" cy="46" r="15.2" fill="#C8AF8E"/>
 <path d="M27.5 61.3L29 56L43 57.5L57.5 56L59 61.3Z" fill="#fff"/>
 <path d="M36 44q0-4 2.5-4t2.5 4-2.5 4-2.5-4zM43.5 40h2.5v8h-2v-6" fill="none" stroke="#fff" stroke-width="1.2"/>
 <use href="#cloud" x="38" y="35" width="7" height="3"/>
 <use href="#cloud" x="54" y="45" width="7" height="3"/>
 <path d="M50 37l6-5" stroke="#C0392B" stroke-width="2.5"/>
 <use href="#star" x="25.5" y="34.5" width="2.5" height="2.5"/>
 <text x="73" y="42" font-family="Liberation Sans" font-weight="bold" font-size="2.6" fill="#E8643C" textLength="37" lengthAdjust="spacingAndGlyphs">WRITE GREAT TITLE HERE</text>
 <g font-family="Liberation Sans" font-size="2.6" fill="#E6EDF3"><text x="73" y="45.8" textLength="77" lengthAdjust="spacingAndGlyphs">We have many PowerPoint templates that has been specifically designed</text><text x="73" y="49.6" textLength="70" lengthAdjust="spacingAndGlyphs">designed to help anyone that is stepping into the world of PowerPoint</text><text x="73" y="53.4" textLength="40" lengthAdjust="spacingAndGlyphs">PowerPoint for the very first time.</text></g>
</svg>
<svg class="a" style="left:34px;top:525px" width="166" height="93" viewBox="0 0 166 93">
 <rect width="166" height="93" fill="url(#sky2)"/>
 <g font-family="Liberation Sans" font-weight="bold" font-size="4.6"><text x="4.2" y="10.2" fill="#F4F4F4" textLength="28" lengthAdjust="spacingAndGlyphs">WRITE YOUR</text><text x="33.5" y="10.2" fill="#E8643C" textLength="26" lengthAdjust="spacingAndGlyphs">GREAT TITLE</text><text x="59.8" y="10.2" fill="#F4F4F4" textLength="12" lengthAdjust="spacingAndGlyphs">HERE</text></g>
 <rect x="5" y="11.4" width="73" height="0.6" fill="#E8643C"/>
 <text x="5" y="14" font-family="Liberation Sans" font-size="2" fill="#C5D2DE" textLength="32" lengthAdjust="spacingAndGlyphs">Your subtitle text goes here for this slide</text>
 <path d="M78 10l5-4M79 6.5l2 3" stroke="#E8643C" stroke-width="0.9"/>
 <g fill="none" stroke="#E8603C" stroke-width="1.3">
  <path d="M82.9 29l9.5 9.5-9.5 9.5-9.5-9.5z"/>
  <path d="M68.6 43.7l9.5 9.5-9.5 9.5-9.5-9.5z"/>
  <path d="M97.2 43.7l9.5 9.5-9.5 9.5-9.5-9.5z"/>
  <path d="M82.9 58l9.5 9.5-9.5 9.5-9.5-9.5z"/>
 </g>
 <g fill="#E0E8F0"><rect x="81" y="36" width="3.5" height="5"/><rect x="66.8" y="51.2" width="3.5" height="3.5"/><circle cx="97.2" cy="53.2" r="2" fill="none" stroke="#E0E8F0" stroke-width="0.7"/><path d="M80.5 69l2.4-2.4 2.4 2.4v2h-4.8z"/></g>
 <g fill="#fff">
  <rect x="56" y="35" width="19" height="0.9"/><circle cx="56" cy="35.4" r="1.3"/>
  <rect x="103.5" y="45" width="19.7" height="0.9"/><circle cx="123.2" cy="45.5" r="1.3"/>
  <rect x="44.4" y="61.2" width="18.8" height="0.9"/><circle cx="44.4" cy="61.6" r="1.3"/>
  <rect x="93.7" y="72" width="18.8" height="0.9"/><circle cx="112.5" cy="72.4" r="1.3"/>
 </g>
 <g fill="#DCE5EE" opacity="0.55">
  <rect x="30" y="36.5" width="22" height="0.9"/><rect x="33" y="38.3" width="19" height="0.9"/><rect x="34" y="40.1" width="18" height="0.9"/>
  <rect x="126" y="46.5" width="22" height="0.9"/><rect x="126" y="48.3" width="19" height="0.9"/><rect x="126" y="50.1" width="18" height="0.9"/>
  <rect x="16" y="62.5" width="22" height="0.9"/><rect x="19" y="64.3" width="19" height="0.9"/><rect x="20" y="66.1" width="18" height="0.9"/>
  <rect x="115" y="73.5" width="22" height="0.9"/><rect x="115" y="75.3" width="19" height="0.9"/><rect x="115" y="77.1" width="18" height="0.9"/>
 </g>
 <circle cx="82.9" cy="53.2" r="1.8" fill="#E8603C"/>
</svg>
<svg class="a" style="left:34px;top:640px" width="166" height="79" viewBox="0 0 166 79">
 <rect width="166" height="93" fill="url(#sky2)"/>
 <g font-family="Liberation Sans" font-weight="bold" font-size="4.6"><text x="4.2" y="10.2" fill="#F4F4F4" textLength="28" lengthAdjust="spacingAndGlyphs">WRITE YOUR</text><text x="33.5" y="10.2" fill="#E8643C" textLength="26" lengthAdjust="spacingAndGlyphs">GREAT TITLE</text><text x="59.8" y="10.2" fill="#F4F4F4" textLength="12" lengthAdjust="spacingAndGlyphs">HERE</text></g>
 <rect x="5" y="11.4" width="73" height="0.6" fill="#E8643C"/>
 <text x="5" y="14" font-family="Liberation Sans" font-size="2" fill="#C5D2DE" textLength="32" lengthAdjust="spacingAndGlyphs">Your subtitle text goes here for this slide</text>
 <path d="M78 10l5-4M79 6.5l2 3" stroke="#E8643C" stroke-width="0.9"/>
 <g fill="#DCE5EE" opacity="0.5"><rect x="15.8" y="24.5" width="135" height="0.7"/><rect x="15.8" y="27.3" width="135" height="0.7"/><rect x="15.8" y="30.1" width="135" height="0.7"/><rect x="30" y="32.9" width="105" height="0.7"/></g>
 <g fill="#E8613B">
  <rect x="14.9" y="46" width="28.1" height="29.7"/><rect x="73" y="46" width="27.8" height="29.7"/><rect x="131" y="46" width="28" height="29.7"/>
  <rect x="7.2" y="47" width="5.8" height="5.3"/><rect x="65.3" y="47" width="5.8" height="5.3"/><rect x="123.3" y="47" width="5.8" height="5.3"/>
 </g>
 <g fill="#fff"><rect x="44" y="54" width="28.2" height="25"/><rect x="102" y="54" width="28" height="25"/></g>
 <g fill="#FBE3DA" opacity="0.75"><rect x="20.4" y="50.5" width="17" height="0.6"/><rect x="18.9" y="53.1" width="20" height="0.6"/><rect x="18.9" y="55.7" width="20" height="0.6"/><rect x="20.4" y="58.3" width="17" height="0.6"/><rect x="18.9" y="60.9" width="20" height="0.6"/><rect x="18.9" y="63.5" width="20" height="0.6"/><rect x="20.4" y="66.1" width="17" height="0.6"/><rect x="18.9" y="68.7" width="20" height="0.6"/><rect x="78.5" y="50.5" width="17" height="0.6"/><rect x="77.0" y="53.1" width="20" height="0.6"/><rect x="77.0" y="55.7" width="20" height="0.6"/><rect x="78.5" y="58.3" width="17" height="0.6"/><rect x="77.0" y="60.9" width="20" height="0.6"/><rect x="77.0" y="63.5" width="20" height="0.6"/><rect x="78.5" y="66.1" width="17" height="0.6"/><rect x="77.0" y="68.7" width="20" height="0.6"/><rect x="136.5" y="50.5" width="17" height="0.6"/><rect x="135.0" y="53.1" width="20" height="0.6"/><rect x="135.0" y="55.7" width="20" height="0.6"/><rect x="136.5" y="58.3" width="17" height="0.6"/><rect x="135.0" y="60.9" width="20" height="0.6"/><rect x="135.0" y="63.5" width="20" height="0.6"/><rect x="136.5" y="66.1" width="17" height="0.6"/><rect x="135.0" y="68.7" width="20" height="0.6"/></g>
 <g fill="#9A9A9A" opacity="0.7"><rect x="50" y="59" width="16" height="0.7"/><rect x="48" y="62" width="20" height="0.7"/><rect x="48" y="65" width="20" height="0.7"/><rect x="48" y="68" width="20" height="0.7"/><rect x="48" y="71" width="20" height="0.7"/>
 <rect x="108" y="59" width="16" height="0.7"/><rect x="106" y="62" width="20" height="0.7"/><rect x="106" y="65" width="20" height="0.7"/><rect x="106" y="68" width="20" height="0.7"/><rect x="106" y="71" width="20" height="0.7"/></g>
</svg>

<!-- main slide -->
<svg class="a" style="left:258px;top:227px" width="690" height="388"><use href="#s1" width="690" height="388"/></svg>


<!-- main scrollbar -->
<div class="a" style="left:963px;top:161px;width:14px;height:468px;background:#DCDCDC"></div>
<div class="sb" style="left:963px;top:162px;width:15px;height:15px"></div>
<div class="sb" style="left:963px;top:176px;width:15px;height:18px"></div>
<div class="sb" style="left:963px;top:614px;width:15px;height:15px"></div>
<div class="sb" style="left:963px;top:690px;width:15px;height:13px"></div>
<div class="sb" style="left:963px;top:702px;width:15px;height:15px"></div>
<svg class="a" style="left:0;top:0" width="977" height="738">
 <g fill="#555">
  <path d="M226 172.5l3.5-3.5 3.5 3.5z"/>
  <path d="M226 708l3.5 3.5 3.5-3.5z"/>
  <path d="M967 171l3.5-3.5 3.5 3.5z"/>
  <path d="M967 620l3.5 3.5 3.5-3.5z"/>
  <path d="M966.5 640l4-4 4 4zM966.5 645l4-4 4 4z"/>
  <path d="M966.5 652.5l4 4 4-4zM966.5 657.5l4 4 4-4z"/>
  <path d="M967 698l3.5-3.5 3.5 3.5z"/>
  <path d="M967 708l3.5 3.5 3.5-3.5z"/>
 </g>
 <rect x="966.5" y="640" width="8" height="1.2" fill="#555"/>
 <rect x="966.5" y="656.5" width="8" height="1.2" fill="#555"/>
</svg>
<!-- notes -->
<div class="a" style="left:244px;top:685px;width:733px;height:1px;background:#C6C6C6"></div>
<div class="a" style="left:253px;top:693px;font-size:14.8px;line-height:18px;color:#595959;-webkit-text-stroke:0.2px currentColor">单击此处添加备注</div>

<!-- status bar -->
<div id="status" class="a"></div>
<div class="a st" style="left:4px;top:723px;word-spacing:1px">幻灯片 第 1 张，共 25 张</div>
<div class="a st" style="left:191px;top:722px">中文(中国)</div>
<div class="a st" style="left:517px;top:722px">备注</div>
<div class="a st" style="left:578px;top:722px">批注</div>
<div class="a" style="left:909px;top:722px;font-size:14px;line-height:15px;color:#444">72%</div>
<div class="a" style="left:622px;top:720px;width:37px;height:18px;background:#C8C8C8"></div>
<svg class="a" style="left:0;top:712px" width="977" height="26" viewBox="0 712 977 26">
 <g fill="none" stroke="#6A6A6A" stroke-width="1">
  <path d="M160.5 724.5q3-1.5 6 .5v10q-3-2-6-.5zM166.5 725q2.5-1.8 5-.8M166.5 735q2.5-1.5 5-.8v-2"/>
  <path d="M174.5 725.5l-5.5 5.5-.7 2.2 2.2-.7 5.5-5.5z"/>
  <rect x="633.5" y="723.5" width="14" height="12"/>
  <path d="M636.5 723.5v12M639 726.5h6v4h-6z"/>
  <rect x="671.5" y="723.5" width="5" height="4"/><rect x="679.5" y="723.5" width="5" height="4"/>
  <rect x="671.5" y="731.5" width="5" height="4"/><rect x="679.5" y="731.5" width="5" height="4"/>
  <path d="M709.5 724.5c2-1 4.5-1 6.5.5 2-1.5 4.5-1.5 6.5-.5v11c-2-1-4.5-1-6.5.5-2-1.5-4.5-1.5-6.5-.5zM716 725v10.5"/>
  <path d="M711 727.5h3M711 730h3M718 727.5h3M718 730h3"/>
  <path d="M746.5 723.5h13M748 723.5v5.5h10v-5.5M753 729v4M749.5 734.5h7"/>
  <rect x="948.5" y="722.5" width="13" height="13"/>
  <path d="M955 724v3M953.5 725.5l1.5-1.5 1.5 1.5M955 731v3M953.5 732.5l1.5 1.5 1.5-1.5M950 729h3M951.5 727.5l-1.5 1.5 1.5 1.5M957 729h3M958.5 727.5l1.5 1.5-1.5 1.5"/>
 </g>
 <g fill="none" stroke="#6A6A6A" stroke-width="1.1">
  <path d="M502 728.5h9M502 731.5h9M502 734.5h9"/>
 </g>
 <path d="M504.5 726.5l2-2.5 2 2.5z" fill="#6A6A6A"/>
 <path d="M560.5 724c0-1 .8-1.5 1.8-1.5h10.5c1 0 1.8.5 1.8 1.5v7c0 1-.8 1.5-1.8 1.5h-6.5l-3.5 3.5v-3.5h-.5c-1 0-1.8-.5-1.8-1.5z" fill="#6A6A6A"/>
 <rect x="778" y="728.5" width="6" height="1.6" fill="#6A6A6A"/>
 <rect x="788" y="729" width="100" height="1" fill="#A8A8A8"/>
 <rect x="838" y="726" width="1" height="6" fill="#A8A8A8"/>
 <rect x="821" y="724" width="5" height="11" fill="#6A6A6A"/>
 <path d="M891.5 729.3h7.5M895.2 725.5v7.5" stroke="#6A6A6A" stroke-width="1.6"/>
</svg>

</body></html>
